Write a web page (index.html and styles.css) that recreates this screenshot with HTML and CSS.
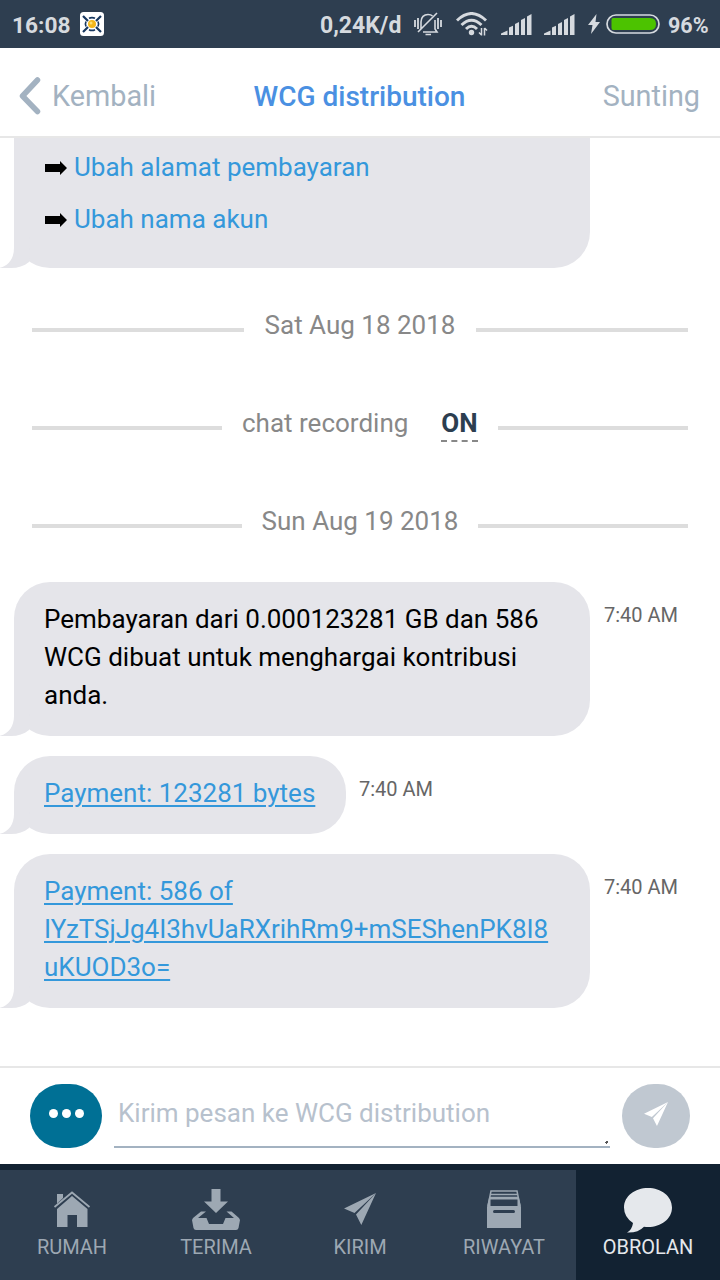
FILE: index.html
```html
<!DOCTYPE html>
<html lang="id">
<head>
<meta charset="utf-8">
<title>WCG distribution</title>
<link rel="stylesheet" href="styles.css">
</head>
<body>
<svg class="defs" width="0" height="0" aria-hidden="true">
  <symbol id="tail" viewBox="0 0 30 36"><path d="M14 0V16C14 26 9 34 -1 36H11C18 36 24 34 29 30L30 0Z" fill="#e5e5ea"/></symbol>
  <symbol id="plane" viewBox="0 0 32 32"><path d="M32 0 0 15.500 10.500 20ZM32 0 12 21.500 17.300 32Z" fill="currentColor"/></symbol>
  <symbol id="signal" viewBox="0 0 31 21"><path d="M0 21V19.500L6.500 16.500V21ZM8 21V13.500L12 11.700V21ZM14 21V10L18 8V21ZM20 21V6L24 4V21ZM26 21V2.500L30.500 0V21Z" fill="currentColor"/></symbol>
</svg>
<div class="app">
  <div class="status">
    <span class="clock">16:08</span>
    <svg class="app-icon" width="24" height="24" viewBox="0 0 24 24">
      <rect width="24" height="24" rx="3.500" fill="#fff"/>
      <path d="M3 4 8 9M21 4 16 9M3 20 8 15M21 20 16 15" stroke="#17375f" stroke-width="2.200"/>
      <path d="M9 6.300Q12 4.800 15 6.300M9 17.700Q12 19.200 15 17.700M6 9.500Q4.800 12 6 14.500M18 9.500Q19.200 12 18 14.500" fill="none" stroke="#17375f" stroke-width="1.700"/>
      <circle cx="12" cy="12" r="4" fill="#f3b61a"/><circle cx="11" cy="11" r="1.500" fill="#ffdf70"/>
    </svg>
    <span class="rate">0,24K/d</span>
    <svg class="bell" width="28" height="24" viewBox="0 0 28 24" fill="none" stroke="currentColor" stroke-width="1.600">
      <path d="M7 17V10C7 5 10 2.500 14 2.500 16 2.500 17.500 3 18.500 4M21 8V17L23 20H9M4 20 23 1M11.500 22.500H17" />
      <path d="M1 8V15M4 6V17M24 6V17M27 8V15" stroke-width="1.800"/>
    </svg>
    <svg class="wifi" width="32" height="24" viewBox="0 0 32 24" fill="none" stroke="currentColor" stroke-width="2.900">
      <path d="M1 8.500Q15.500 -5.500 30 8.500M5.500 13Q15.500 3.500 25.500 13M10 17Q15.500 11.500 21 17"/>
      <circle cx="15.500" cy="20.500" r="2.700" fill="currentColor" stroke="none"/>
      <path d="M25.500 16V23.500M28.500 16V23.500M23 20.500 25.500 23M31 18.500 28.500 16" stroke-width="1.500"/>
    </svg>
    <svg class="signal" width="31" height="21"><use href="#signal"/></svg>
    <svg class="signal second" width="31" height="21"><use href="#signal"/></svg>
    <svg class="bolt" width="12" height="20" viewBox="0 0 12 20"><path d="M8.500 0 0 11H4.500L3 20 12 8H7.500Z" fill="currentColor"/></svg>
    <svg class="battery" width="54" height="20" viewBox="0 0 54 20"><rect x="1" y="1" width="52" height="18" rx="9" fill="none" stroke="#d6dadf" stroke-width="1.700"/><path d="M7 4H44Q50 4 50 10T44 16H7Q5.500 16 5.500 14V6Q5.500 4 7 4Z" fill="#4cc300"/></svg>
    <span class="percent">96%</span>
  </div>

  <div class="header">
    <div class="back">
      <svg width="22" height="38" viewBox="0 0 22 38"><path d="M18.500 3 3.500 19 18.500 34.500" fill="none" stroke="#a3b2c1" stroke-width="5.500" stroke-linecap="round" stroke-linejoin="round"/></svg>
      <span>Kembali</span>
    </div>
    <div class="title">WCG distribution</div>
    <div class="edit">Sunting</div>
  </div>

  <div class="messages">
    <div class="bubble continued">
      <div class="command"><svg width="22" height="14" viewBox="0 0 22 14"><path d="M0 3H15V0L22 7 15 14V11H0Z"/></svg><span class="link">Ubah alamat pembayaran</span></div>
      <div class="command"><svg width="22" height="14" viewBox="0 0 22 14"><path d="M0 3H15V0L22 7 15 14V11H0Z"/></svg><span class="link">Ubah nama akun</span></div>
      <svg class="tail" width="30" height="36"><use href="#tail"/></svg>
    </div>
    <div class="divider first"><span class="rule"></span><span class="date">Sat Aug 18 2018</span><span class="rule"></span></div>
    <div class="divider"><span class="rule rec-left"></span><span class="rec">chat recording</span><b class="on">ON</b><span class="rule"></span></div>
    <div class="divider last"><span class="rule"></span><span class="date sun">Sun Aug 19 2018</span><span class="rule"></span></div>

    <div class="row">
      <div class="bubble wide">Pembayaran dari 0.000123281 GB dan 586<br>WCG dibuat untuk menghargai kontribusi<br>anda.<svg class="tail" width="30" height="36"><use href="#tail"/></svg></div>
      <span class="time">7:40 AM</span>
    </div>
    <div class="row">
      <div class="bubble short"><span class="link pay">Payment: 123281 bytes</span><svg class="tail" width="30" height="36"><use href="#tail"/></svg></div>
      <span class="time near">7:40 AM</span>
    </div>
    <div class="row">
      <div class="bubble wide"><span class="link pay">Payment: 586 of<br><span class="asset">IYzTSjJg4I3hvUaRXrihRm9+mSEShenPK8I8</span><br>uKUOD3o=</span><svg class="tail" width="30" height="36"><use href="#tail"/></svg></div>
      <span class="time">7:40 AM</span>
    </div>
  </div>

  <div class="composer">
    <div class="more"><i></i><i></i><i></i></div>
    <div class="input">Kirim pesan ke WCG distribution<svg class="grip" width="4" height="4" viewBox="0 0 4 4"><path d="M0 1H1V0H3V2H2V3H1V2H0Z" fill="#555"/></svg></div>
    <div class="send"><svg width="24" height="24"><use href="#plane"/></svg></div>
  </div>

  <div class="nav">
    <div class="tab">
      <svg width="48" height="48" viewBox="0 0 48 48" fill="currentColor"><path d="M9 12H15V16L9 21.500Z"/><path d="M6.500 25 24 10.500 41.500 25" fill="none" stroke="currentColor" stroke-width="1.800"/><path d="M24 14 39.500 27V45H29V33H19.500V45H9V27Z"/></svg>
      <span>RUMAH</span>
    </div>
    <div class="tab">
      <svg width="48" height="48" viewBox="0 0 48 48" fill="currentColor"><path d="M19.500 7H28.500V19.500H36L24 31 12 19.500H19.500Z"/><path d="M9 29.500H14L6 36H14.500L17 42H31L33.500 36H42L34.500 29.500H39.500L47 36 48 38 46.500 46Q46 48 44 48H4Q2 48 1.500 46L0 38 1 36Z"/></svg>
      <span>TERIMA</span>
    </div>
    <div class="tab">
      <svg width="48" height="48" viewBox="0 0 48 48"><svg x="8" y="11" width="32" height="32"><use href="#plane"/></svg></svg>
      <span>KIRIM</span>
    </div>
    <div class="tab">
      <svg width="48" height="48" viewBox="0 0 48 48" fill="none" stroke="currentColor" stroke-width="1.500"><path d="M8 24 11 9H37L40 24M10 12.500H38M10 15.500H38"/><path fill="currentColor" fill-rule="evenodd" stroke="none" d="M7 25 9 16H39L41 25V46H7ZM10.500 17.500V24H37.500V17.500ZM14.500 28Q13 28 13 29.500T14.500 31H33.500Q35 31 35 29.500T33.500 28Z"/></svg>
      <span>RIWAYAT</span>
    </div>
    <div class="tab active">
      <svg width="48" height="48" viewBox="0 0 48 48" fill="currentColor"><path d="M24 6C37 6 48 14 48 25.500S37 45 24 45Q22 45 20 44.700 14 51 3 50.500 8 48 9 41 0 35 0 25.500C0 14 11 6 24 6Z"/></svg>
      <span>OBROLAN</span>
    </div>
  </div>
</div>
</body>
</html>
```
FILE: styles.css
```css
* { box-sizing: border-box; }
body { margin: 0; background: #fff; font-family: Roboto, sans-serif; }
.defs { position: absolute; }
.app { width: 720px; height: 1280px; display: flex; flex-direction: column; overflow: hidden; }
svg { flex: none; display: block; }

.status { height: 48px; flex: none; background: #2e3e50; color: #d6dadf; display: flex; align-items: center; font-size: 23px; font-weight: 700; padding: 0 12px; white-space: nowrap; }
.clock { width: 68px; padding-top: 2px; font-size: 22.700px; }
.rate { width: 94px; margin-left: 216px; padding-top: 2px; }
.app-icon + .rate { margin-left: 216px; }
.clock + .app-icon { margin-left: 0; }
.wifi { margin-left: 14px; }
.signal { margin-left: 13px; margin-top: 1px; }
.signal.second { margin-left: 12px; }
.bolt { margin-left: 13px; }
.battery { margin-left: 6px; }
.percent { margin-left: 8px; padding-top: 2px; font-size: 21.500px; }
.clock { flex: none; }
.rate, .percent { flex: none; }

.header { height: 90px; flex: none; display: grid; grid-template-columns: 1fr auto 1fr; align-items: center; padding: 8px 20px 0 19px; border-bottom: 2px solid #e7e7e7; color: #a3b2c1; font-size: 28.800px; white-space: nowrap; }
.back { display: flex; align-items: center; gap: 11px; }
.title { color: #4a90e2; font-size: 28px; font-weight: 500; }
.edit { text-align: right; }

.messages { flex: 1; min-height: 0; font-size: 26px; line-height: 38px; white-space: nowrap; }
.bubble { position: relative; flex: none; margin-left: 14px; padding: 18px 30px 22px; border-radius: 36px; background: #e5e5ea; color: #000; }
.wide { width: 576px; }
.short { width: 332px; }
.continued { width: 576px; height: 130px; padding: 10px 30px 0; border-radius: 0 0 36px 36px; }
.tail { position: absolute; left: -14px; bottom: 0; }
.command { display: flex; align-items: center; gap: 7px; height: 38px; margin-bottom: 14px; }
.command svg { margin: 1px 0 0 1px; }
.link { color: #3498db; }
.pay { text-decoration: underline; text-decoration-thickness: 2px; text-underline-offset: 3px; }
.asset { letter-spacing: -0.020px; }

.divider { display: flex; align-items: center; height: 38px; padding: 0 32px; margin-bottom: 60px; color: #888; }
.divider.first { margin-top: 38px; }
.divider.last { margin-bottom: 42px; }
.rule { flex: 1; height: 4px; margin-top: 10px; background: #ddd; }
.date { margin: 0 21px; }
.date.sun { margin: 0 20px; }
.rec-left { flex: 0 0 190px; margin-right: 20px; }
.rec { margin-right: 33px; }
.on { color: #2c3e50; line-height: 38px; height: 38px; border-bottom: 2px dashed #888; margin-right: 20px; }
.row { display: flex; align-items: flex-start; margin-bottom: 20px; }
.time { margin: 14px 0 0 14px; font-size: 20px; color: #666; }
.time.near { margin-left: 13px; }

.composer { height: 98px; flex: none; border-top: 2px solid #e7e7e7; display: flex; align-items: flex-start; padding: 16px 30px 0; }
.more { width: 72px; height: 64px; border-radius: 32px; background: #007095; display: flex; align-items: center; justify-content: center; gap: 4px; padding-bottom: 5px; }
.more i { width: 9px; height: 9px; border-radius: 50%; background: #fff; }
.input { position: relative; width: 496px; height: 64px; margin: 0 12px; padding: 10px 4px; border-bottom: 2px solid #a3b2c1; color: #b7c1cd; font-size: 26px; line-height: 38px; white-space: nowrap; }
.grip { position: absolute; right: 1px; bottom: 1px; }
.send { width: 68px; height: 64px; border-radius: 32px; background: #c0c8d1; color: #fff; display: flex; align-items: center; justify-content: center; padding-bottom: 4px; }

.nav { height: 116px; flex: none; display: flex; border-top: 6px solid #122232; background: #2e3e50; }
.tab { flex: 1; display: flex; flex-direction: column; align-items: center; padding-top: 12px; color: #9da8b3; font-size: 20px; line-height: 24px; }
.tab svg { overflow: visible; }
.tab span { margin-top: 5px; }
.active { background: #122232; color: #e5e8ec; }
```
